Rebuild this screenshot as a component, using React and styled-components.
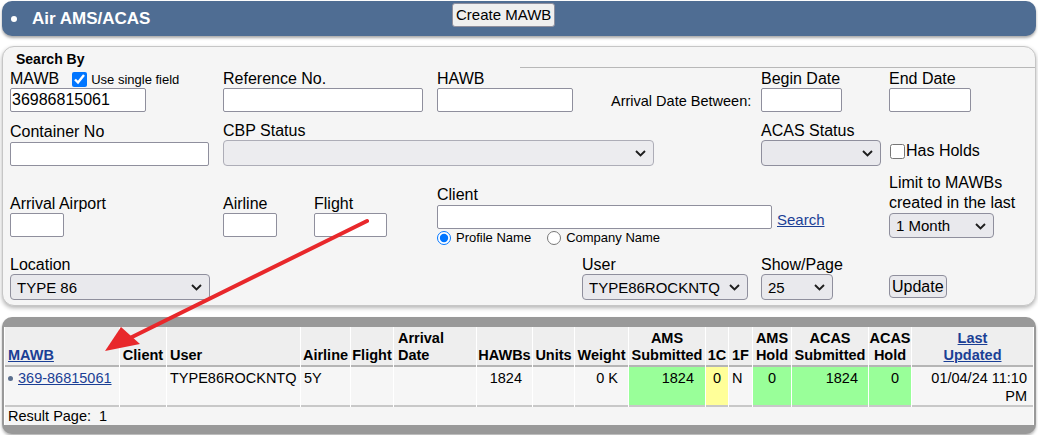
import React from "react";
import styled, { createGlobalStyle } from "styled-components";

const GlobalStyle = createGlobalStyle`
  body {
    margin: 0;
    background: #fff;
    font-family: "Liberation Sans", Arial, sans-serif;
    color: #000;
  }
  * { box-sizing: border-box; }
`;

const Page = styled.div`
  position: relative;
  width: 1038px;
  padding: 1px 2px;
  display: flex;
  flex-direction: column;
`;

const TitleBar = styled.div`
  height: 35px;
  background: #4f6d93;
  border-radius: 10px;
  box-shadow: 0 2px 3px rgba(0, 0, 0, 0.35);
  display: flex;
  align-items: center;
  padding-left: 9px;
`;

const Bullet = styled.span`
  width: 6px;
  height: 6px;
  border-radius: 50%;
  background: #fff;
  margin-right: 15px;
`;

const Title = styled.div`
  flex: 0 0 420px;
  color: #fff;
  font-weight: bold;
  font-size: 17px;
`;

const CreateButton = styled.button`
  height: 24px;
  margin-top: -8px;
  padding: 0 3px;
  font: 15px "Liberation Sans", Arial, sans-serif;
  background: #efefef;
  border: 1px solid #8f8f9d;
  border-radius: 3px;
`;

const SearchPanel = styled.div`
  margin-top: 10px;
  border: 1px solid #c6c6c6;
  border-radius: 12px;
  background: #f5f5f5;
  box-shadow: 0 2px 4px rgba(0, 0, 0, 0.3);
  padding: 4px 7px 5px;
`;

const SearchHead = styled.div`
  display: flex;
  align-items: flex-end;
  height: 17px;
`;

const SearchTitle = styled.div`
  flex: 0 0 ${(p) => p.$w}px;
  font-weight: bold;
  font-size: 14px;
  line-height: 16px;
  padding-left: 6px;
  align-self: flex-start;
`;

const HeadRule = styled.div`
  flex: 1;
  border-bottom: 1px solid #b8b8b8;
  margin-right: -7px;
`;

const FormGrid = styled.div`
  display: grid;
  grid-template-columns: 213px 214px 174px 150px 128px 1fr;
  grid-template-rows: 44px 54px 80px 54px;
  align-items: end;
`;

const Field = styled.div`
  grid-column: ${(p) => p.$col || "auto"};
  justify-self: ${(p) => p.$justify || "stretch"};
  margin-right: ${(p) => p.$mr || 0}px;
  padding-bottom: ${(p) => p.$pb || 0}px;
  display: flex;
  flex-direction: ${(p) => (p.$row ? "row" : "column")};
  align-items: ${(p) => (p.$row ? "center" : "flex-start")};
`;

const Pair = styled.div`
  display: flex;
  flex-direction: column;
  width: ${(p) => p.$w}px;
`;

const Label = styled.div`
  font-size: 16px;
  line-height: ${(p) => p.$lh || 18}px;
  margin-bottom: ${(p) => (p.$mb === undefined ? 1 : p.$mb)}px;
  display: flex;
  align-items: center;
  white-space: nowrap;
`;

const SmallText = styled.span`
  font-size: 13px;
  line-height: 15px;
  margin-left: ${(p) => p.$ml || 0}px;
  white-space: nowrap;
`;

const TextInput = styled.input`
  width: ${(p) => p.$w}px;
  height: 24px;
  border: 1px solid #8f8f9d;
  border-radius: 2px;
  background: #fff;
  font: 16px "Liberation Sans", Arial, sans-serif;
  padding: 0 1px;
  outline: none;
`;

const Check = styled.input`
  width: 15px;
  height: 15px;
  margin: 0 ${(p) => p.$mr || 0}px 0 ${(p) => p.$ml || 0}px;
  accent-color: #0075ff;
`;

const SelectBox = styled.span`
  position: relative;
  display: inline-block;
  width: ${(p) => p.$w}px;
  height: ${(p) => p.$h || 26}px;
`;

const NativeSelect = styled.select`
  appearance: none;
  width: 100%;
  height: 100%;
  border: 1px solid #8f8f9d;
  border-radius: 4px;
  background: #e9e9ed;
  color: #000;
  font: 15px "Liberation Sans", Arial, sans-serif;
  padding: 0 0 0 6px;
  outline: none;
`;

const Chevron = styled.svg`
  position: absolute;
  right: 8px;
  top: 50%;
  margin-top: -3px;
  pointer-events: none;
`;

const Select = ({ w, h, value, disabled }) => (
  <SelectBox $w={w} $h={h}>
    <NativeSelect defaultValue={value} disabled={disabled}>
      <option value={value}>{value}</option>
    </NativeSelect>
    <Chevron width="11" height="7" viewBox="0 0 11 7">
      <path d="M1 1 L5.5 5.5 L10 1" fill="none" stroke="#1e1e1e" strokeWidth="1.9" />
    </Chevron>
  </SelectBox>
);

const BetweenText = styled.div`
  font-size: 14.5px;
  line-height: 16px;
  padding-bottom: 3px;
  white-space: nowrap;
`;

const ClientRow = styled.div`
  display: flex;
  align-items: flex-end;
`;

const SearchLink = styled.a`
  font-size: 15px;
  line-height: 17px;
  color: #1b3f95;
  text-decoration: underline;
  margin-left: 5px;
  margin-bottom: 1px;
`;

const RadioRow = styled.div`
  display: flex;
  align-items: center;
  height: 17px;
`;

const Radio = styled.input`
  width: 14px;
  height: 14px;
  margin: 0 5px 0 ${(p) => p.$ml || 0}px;
  accent-color: #0075ff;
`;

const PlainButton = styled.button`
  height: 23px;
  padding: 0 2px;
  font: 16px "Liberation Sans", Arial, sans-serif;
  background: #e9e9ed;
  border: 1px solid #8f8f9d;
  border-radius: 4px;
`;

const ResultsPanel = styled.div`
  margin-top: 11px;
  background: #999;
  border-radius: 10px;
  padding: 10px 2px 9px;
  box-shadow: 0 2px 3px rgba(0, 0, 0, 0.3);
`;

const Table = styled.table`
  width: 1030px;
  table-layout: fixed;
  border-collapse: separate;
  border-spacing: 1px 0;
  background: #fff;
`;

const Th = styled.th`
  background: #eeeeee;
  font-size: 14.5px;
  font-weight: bold;
  line-height: 17px;
  vertical-align: bottom;
  text-align: ${(p) => p.$align || "center"};
  padding: 3px ${(p) => (p.$align ? 1 : 0)}px 1px ${(p) => p.$pl || 0}px;
  border-bottom: 2px solid #b5b5b5;
  white-space: normal;
`;

const Td = styled.td`
  background: ${(p) => p.$bg || "#f6f6f6"};
  font-size: 14.5px;
  line-height: 18px;
  vertical-align: top;
  text-align: ${(p) => p.$align || "left"};
  padding: 2px ${(p) => p.$pr || 3}px 0 ${(p) => p.$pl || 3}px;
  border-bottom: 2px solid #c8c8c8;
  white-space: ${(p) => (p.$wrap ? "normal" : "nowrap")};
`;

const FooterCell = styled.td`
  background: #f5f5f5;
  font-size: 14.5px;
  line-height: 17px;
  padding: 1px 3px 0;
`;

const HeadLink = styled.a`
  color: #1b3f95;
  text-decoration: underline;
`;

const RowDot = styled.span`
  display: inline-block;
  width: 5px;
  height: 5px;
  border-radius: 50%;
  background: #5b6f8e;
  margin: 0 5px 2px 0;
  vertical-align: middle;
`;

const ArrowLayer = styled.svg`
  position: absolute;
  left: 0;
  top: 0;
  pointer-events: none;
`;

const columns = [
  { w: 114, label: <HeadLink>MAWB</HeadLink>, align: "left", pl: 3 },
  { w: 46, label: "Client" },
  { w: 133, label: "User", align: "left", pl: 3 },
  { w: 49, label: "Airline" },
  { w: 42, label: "Flight" },
  { w: 82, label: <>Arrival<br />Date</>, align: "left", pl: 4 },
  { w: 55, label: "HAWBs" },
  { w: 41, label: "Units" },
  { w: 53, label: "Weight" },
  { w: 76, label: <>AMS<br />Submitted</> },
  { w: 22, label: "1C" },
  { w: 23, label: "1F" },
  { w: 38, label: <>AMS<br />Hold</> },
  { w: 76, label: <>ACAS<br />Submitted</> },
  { w: 42, label: <>ACAS<br />Hold</> },
  { w: 121, label: <HeadLink>Last<br />Updated</HeadLink> },
];

export default function App() {
  return (
    <>
      <GlobalStyle />
      <Page>
        <TitleBar>
          <Bullet />
          <Title>Air AMS/ACAS</Title>
          <CreateButton>Create MAWB</CreateButton>
        </TitleBar>

        <SearchPanel>
          <SearchHead>
            <SearchTitle $w={510}>Search By</SearchTitle>
            <HeadRule />
          </SearchHead>
          <FormGrid>
            <Field>
              <Label $mb={0}>
                MAWB
                <Check type="checkbox" defaultChecked $ml={13} $mr={4} />
                <SmallText>Use single field</SmallText>
              </Label>
              <TextInput $w={136} defaultValue="36986815061" />
            </Field>
            <Field>
              <Label $mb={0}>Reference No.</Label>
              <TextInput $w={200} />
            </Field>
            <Field>
              <Label $mb={0}>HAWB</Label>
              <TextInput $w={136} />
            </Field>
            <Field>
              <BetweenText>Arrival Date Between:</BetweenText>
            </Field>
            <Field>
              <Label $mb={0}>Begin Date</Label>
              <TextInput $w={81} />
            </Field>
            <Field>
              <Label $mb={0}>End Date</Label>
              <TextInput $w={82} />
            </Field>

            <Field $col="1">
              <Label>Container No</Label>
              <TextInput $w={199} />
            </Field>
            <Field $col="2 / span 3">
              <Label $mb={0}>CBP Status</Label>
              <Select w={431} value="" disabled />
            </Field>
            <Field $col="5">
              <Label $mb={0}>ACAS Status</Label>
              <Select w={120} value="" />
            </Field>
            <Field $col="6" $row $pb={6}>
              <Check type="checkbox" $ml={1} $mr={1} />
              <Label $mb={0}>Has Holds</Label>
            </Field>

            <Field $col="1" $pb={9}>
              <Label $mb={0}>Arrival Airport</Label>
              <TextInput $w={54} />
            </Field>
            <Field $col="2" $row $pb={9}>
              <Pair $w={91}>
                <Label $mb={0}>Airline</Label>
                <TextInput $w={54} />
              </Pair>
              <Pair $w={73}>
                <Label $mb={0}>Flight</Label>
                <TextInput $w={73} />
              </Pair>
            </Field>
            <Field $col="3 / span 3">
              <Label $mb={1}>Client</Label>
              <ClientRow>
                <TextInput $w={335} />
                <SearchLink>Search</SearchLink>
              </ClientRow>
              <RadioRow>
                <Radio type="radio" name="clientType" defaultChecked />
                <SmallText>Profile Name</SmallText>
                <Radio type="radio" name="clientType" $ml={16} />
                <SmallText>Company Name</SmallText>
              </RadioRow>
            </Field>
            <Field $col="6" $pb={8}>
              <Label $lh={20} $mb={0}>
                Limit to MAWBs
                <br />
                created in the last
              </Label>
              <Select w={105} h={25} value="1 Month" />
            </Field>

            <Field $col="1">
              <Label $mb={0}>Location</Label>
              <Select w={200} value="TYPE 86" />
            </Field>
            <Field $col="3 / span 2" $justify="end" $mr={13}>
              <Label $mb={0}>User</Label>
              <Select w={166} value="TYPE86ROCKNTQ" />
            </Field>
            <Field $col="5">
              <Label $mb={0}>Show/Page</Label>
              <Select w={72} value="25" />
            </Field>
            <Field $col="6" $pb={2}>
              <PlainButton>Update</PlainButton>
            </Field>
          </FormGrid>
        </SearchPanel>

        <ResultsPanel>
          <Table>
            <colgroup>
              {columns.map((c, i) => (
                <col key={i} style={{ width: c.w }} />
              ))}
            </colgroup>
            <thead>
              <tr>
                {columns.map((c, i) => (
                  <Th key={i} $align={c.align} $pl={c.pl}>
                    {c.label}
                  </Th>
                ))}
              </tr>
            </thead>
            <tbody>
              <tr>
                <Td>
                  <RowDot />
                  <HeadLink>369-86815061</HeadLink>
                </Td>
                <Td />
                <Td>TYPE86ROCKNTQ</Td>
                <Td>5Y</Td>
                <Td />
                <Td />
                <Td $align="right" $pr={10}>1824</Td>
                <Td />
                <Td $align="right" $pr={10}>0 K</Td>
                <Td $align="right" $pr={11} $bg="#99ff99">1824</Td>
                <Td $align="center" $pl={0} $pr={0} $bg="#ffff99">0</Td>
                <Td>N</Td>
                <Td $align="center" $pl={0} $pr={0} $bg="#99ff99">0</Td>
                <Td $align="right" $pr={10} $bg="#99ff99">1824</Td>
                <Td $align="right" $pr={12} $bg="#99ff99">0</Td>
                <Td $align="right" $pr={6} $wrap>01/04/24 11:10 PM</Td>
              </tr>
              <tr>
                <FooterCell colSpan={16}>Result Page:&nbsp; 1</FooterCell>
              </tr>
            </tbody>
          </Table>
        </ResultsPanel>

        <ArrowLayer width="1038" height="442" viewBox="0 0 1038 442">
          <line x1="367" y1="221" x2="126" y2="340" stroke="#e8282b" strokeWidth="4" strokeLinecap="round" />
          <polygon points="105,351 121,327 140,344" fill="#e8282b" />
        </ArrowLayer>
      </Page>
    </>
  );
}
